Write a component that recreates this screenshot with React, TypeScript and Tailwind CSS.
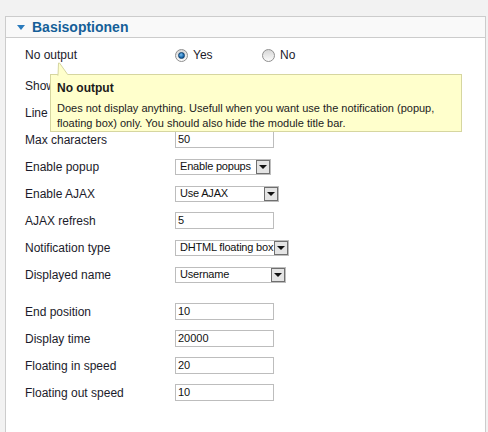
import React from "react";

const font = { fontFamily: '"Liberation Sans", Arial, sans-serif' };

function Radio({ checked, label }: { checked?: boolean; label: string }) {
  return (
    <label className="flex items-center gap-[5px]">
      <span className="flex h-[13px] w-[13px] items-center justify-center rounded-full border border-[#8f8f8f] bg-linear-to-b from-[#d6d6d6] to-[#fbfbfb]">
        {checked && (
          <span className="h-[7px] w-[7px] rounded-full border border-[#0d3f6e] bg-[radial-gradient(circle_at_40%_35%,#7cc0f0,#1b6bb0_60%,#0b3f73)]" />
        )}
      </span>
      <span className="text-[12px] text-[#1b1b2b]">{label}</span>
    </label>
  );
}

function TextInput({ value }: { value: string }) {
  return (
    <div className="flex h-[17px] w-[99px] items-center border border-[#bdbdbd] bg-white pl-[2px] text-[11px] text-[#111]">
      {value}
    </div>
  );
}

function Select({ value, width }: { value: string; width: string }) {
  return (
    <div className={`flex h-[16px] items-center border border-[#bdbdbd] bg-white ${width}`}>
      <span className="min-w-0 flex-1 overflow-hidden pl-[4px] text-[11px] tracking-[-0.2px] text-[#111] whitespace-nowrap">
        {value}
      </span>
      <span className="flex h-[14px] w-[14px] shrink-0 items-center justify-center border border-[#6f6f6f] bg-[#e4e4e4]">
        <span className="h-0 w-0 border-x-[4px] border-t-[4px] border-x-transparent border-t-[#111]" />
      </span>
    </div>
  );
}

function Row({ label, children, h = "h-[27px]" }: { label: string; children?: React.ReactNode; h?: string }) {
  return (
    <div className={`flex items-center ${h}`}>
      <div className="w-[150px] text-[12px] text-[#1b1b2b]">{label}</div>
      {children}
    </div>
  );
}

// rows that sit under the tooltip: only the start of the label shows
function HiddenRow({ label }: { label: string }) {
  return (
    <div className="flex h-[27px] items-center">
      <div className="w-[25px] overflow-hidden whitespace-nowrap text-[12px] text-[#1b1b2b]">{label}</div>
    </div>
  );
}

export default function App() {
  return (
    <div className="min-h-screen overflow-hidden bg-[#f2f2f2] pt-4" style={font}>
      <div className="relative ml-[5px] w-[481px] border border-[#cccccc] bg-white pb-[40px]">
        {/* Header */}
        <div className="flex h-[21px] items-center border-b border-[#cccccc] bg-[#f9f9f9] pl-[11px]">
          <span className="mr-[7px] h-0 w-0 border-x-[4px] border-t-[5px] border-x-transparent border-t-[#2a7bbd]" />
          <span className="text-[14px] font-bold text-[#155f98]">Basisoptionen</span>
        </div>

        <div className="pl-[19px]">
          <Row label="No output" h="h-[34px]">
            <div className="flex items-center">
              <div className="w-[87px]"><Radio checked label="Yes" /></div>
              <Radio label="No" />
            </div>
          </Row>
          <HiddenRow label="Show" />
          <HiddenRow label="Line" />
          <Row label="Max characters"><TextInput value="50" /></Row>
          <Row label="Enable popup"><Select value="Enable popups" width="w-[96px]" /></Row>
          <Row label="Enable AJAX"><Select value="Use AJAX" width="w-[104px]" /></Row>
          <Row label="AJAX refresh"><TextInput value="5" /></Row>
          <Row label="Notification type"><Select value="DHTML floating box" width="w-[114px]" /></Row>
          <Row label="Displayed name"><Select value="Username" width="w-[111px]" /></Row>
          <div className="h-[10px]" />
          <Row label="End position"><TextInput value="10" /></Row>
          <Row label="Display time"><TextInput value="20000" /></Row>
          <Row label="Floating in speed"><TextInput value="20" /></Row>
          <Row label="Floating out speed"><TextInput value="10" /></Row>
        </div>

        {/* Tooltip */}
        <div className="absolute left-[44px] top-[57px] h-[58px] w-[412px] border border-[#d6d6a0] bg-[#ffffcc] px-[6px] pt-[4px]">
          <svg className="absolute left-[6px] top-[-13px]" width="12" height="14" viewBox="0 0 12 14">
            <path d="M1 14 L1.5 1 Q2 0.5 2.5 1 L11 13" fill="#ffffcc" stroke="#d6d6a0" strokeWidth="1" />
            <rect x="1.6" y="12.5" width="9" height="2" fill="#ffffcc" />
          </svg>
          <div className="text-[12px] font-bold leading-[18px] text-[#1b1b1b]">No output</div>
          <div className="mt-[4px] text-[11px] leading-[15px] text-[#222]">
            Does not display anything. Usefull when you want use the notification (popup,
            <br />
            floating box) only. You should also hide the module title bar.
          </div>
        </div>
      </div>
    </div>
  );
}
